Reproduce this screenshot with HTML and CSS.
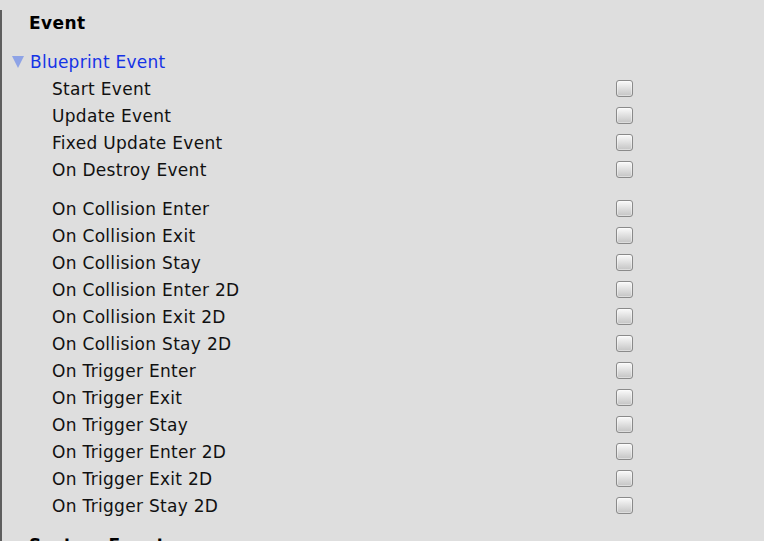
FILE: index.html
```html
<!DOCTYPE html>
<html>
<head>
<meta charset="utf-8">
<link rel="stylesheet" href="styles.css">
</head>
<body>
<div class="panel">
  <h1 class="heading">Event</h1>
  <div class="foldout">
    <span class="arrow"></span>
    <span class="foldout-label">Blueprint Event</span>
  </div>
  <div class="group">
    <div class="row"><span class="label">Start Event</span><span class="check"></span></div>
    <div class="row"><span class="label">Update Event</span><span class="check"></span></div>
    <div class="row"><span class="label">Fixed Update Event</span><span class="check"></span></div>
    <div class="row"><span class="label">On Destroy Event</span><span class="check"></span></div>
  </div>
  <div class="group group-gap">
    <div class="row"><span class="label">On Collision Enter</span><span class="check"></span></div>
    <div class="row"><span class="label">On Collision Exit</span><span class="check"></span></div>
    <div class="row"><span class="label">On Collision Stay</span><span class="check"></span></div>
    <div class="row"><span class="label">On Collision Enter 2D</span><span class="check"></span></div>
    <div class="row"><span class="label">On Collision Exit 2D</span><span class="check"></span></div>
    <div class="row"><span class="label">On Collision Stay 2D</span><span class="check"></span></div>
    <div class="row"><span class="label">On Trigger Enter</span><span class="check"></span></div>
    <div class="row"><span class="label">On Trigger Exit</span><span class="check"></span></div>
    <div class="row"><span class="label">On Trigger Stay</span><span class="check"></span></div>
    <div class="row"><span class="label">On Trigger Enter 2D</span><span class="check"></span></div>
    <div class="row"><span class="label">On Trigger Exit 2D</span><span class="check"></span></div>
    <div class="row"><span class="label">On Trigger Stay 2D</span><span class="check"></span></div>
  </div>
  <h1 class="heading heading-next">System Event</h1>
</div>
</body>
</html>
```
FILE: styles.css
```css
html, body {
  margin: 0;
  padding: 0;
  background: #dedede;
  overflow: hidden;
}
body {
  width: 764px;
  height: 541px;
  font-family: "DejaVu Sans", Verdana, sans-serif;
  color: #111;
}
.panel {
  height: 541px;
  border-left: 2px solid #5e5e5e;
  box-sizing: border-box;
}
.heading {
  margin: 10px 0 0 27px;
  font-size: 17px;
  font-weight: bold;
  line-height: 27px;
  letter-spacing: 0.4px;
  color: #000;
}
.heading-next {
  margin-top: 13px;
}
.foldout {
  display: flex;
  align-items: center;
  height: 27px;
  margin-top: 11px;
  padding-left: 10px;
}
.arrow {
  width: 0;
  height: 0;
  border-left: 6.5px solid transparent;
  border-right: 6.5px solid transparent;
  border-top: 12px solid #8ea3e6;
  margin-right: 6px;
  margin-top: 1px;
}
.foldout-label {
  font-size: 17px;
  letter-spacing: 0.25px;
  color: #1533e6;
}
.group-gap {
  margin-top: 12px;
}
.row {
  display: grid;
  grid-template-columns: 564px 17px;
  align-items: center;
  height: 27px;
  padding-left: 50px;
  font-size: 17px;
  letter-spacing: 0.3px;
}
.check {
  width: 17px;
  height: 17px;
  box-sizing: border-box;
  border: 1px solid #8a8a8a;
  border-radius: 3px;
  background: linear-gradient(#fafafa, #c4c4c4);
  box-shadow: inset 0 0 0 1px rgba(255,255,255,0.4);
}
```
